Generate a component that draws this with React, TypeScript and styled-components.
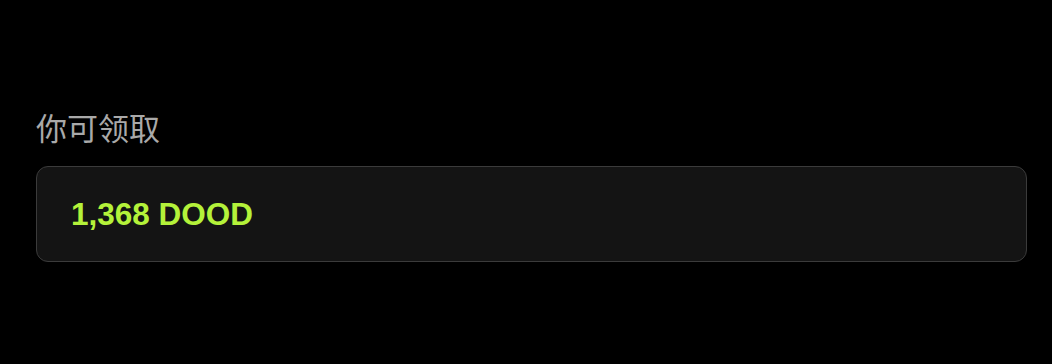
import styled, { createGlobalStyle } from 'styled-components';

const GlobalStyle = createGlobalStyle`
  html, body {
    margin: 0;
    padding: 0;
    background: #000000;
  }
  body {
    font-family: "Liberation Sans", "Noto Sans CJK SC", sans-serif;
  }
`;

const StyledPage = styled.div`
  width: 1052px;
  height: 364px;
  box-sizing: border-box;
  padding: 106px 25px 0 36px;
  display: flex;
  flex-direction: column;
  gap: 18px;
`;

const StyledLabel = styled.div`
  color: #a9a9a9;
  font-size: 31px;
  line-height: 42px;
  font-family: "Noto Sans CJK SC", sans-serif;
`;

const StyledAmountBox = styled.div`
  height: 96px;
  box-sizing: border-box;
  background: #141414;
  border: 1.5px solid #3b3b3b;
  border-radius: 12px;
  display: flex;
  align-items: center;
  padding: 0 34px;
`;

const StyledAmount = styled.span`
  color: #b4f23a;
  font-size: 31.5px;
  font-weight: bold;
  font-family: "Liberation Sans", Arial, sans-serif;
`;

export default function App() {
  return (
    <>
      <GlobalStyle />
      <StyledPage>
        <StyledLabel>你可领取</StyledLabel>
        <StyledAmountBox>
          <StyledAmount>1,368 DOOD</StyledAmount>
        </StyledAmountBox>
      </StyledPage>
    </>
  );
}
